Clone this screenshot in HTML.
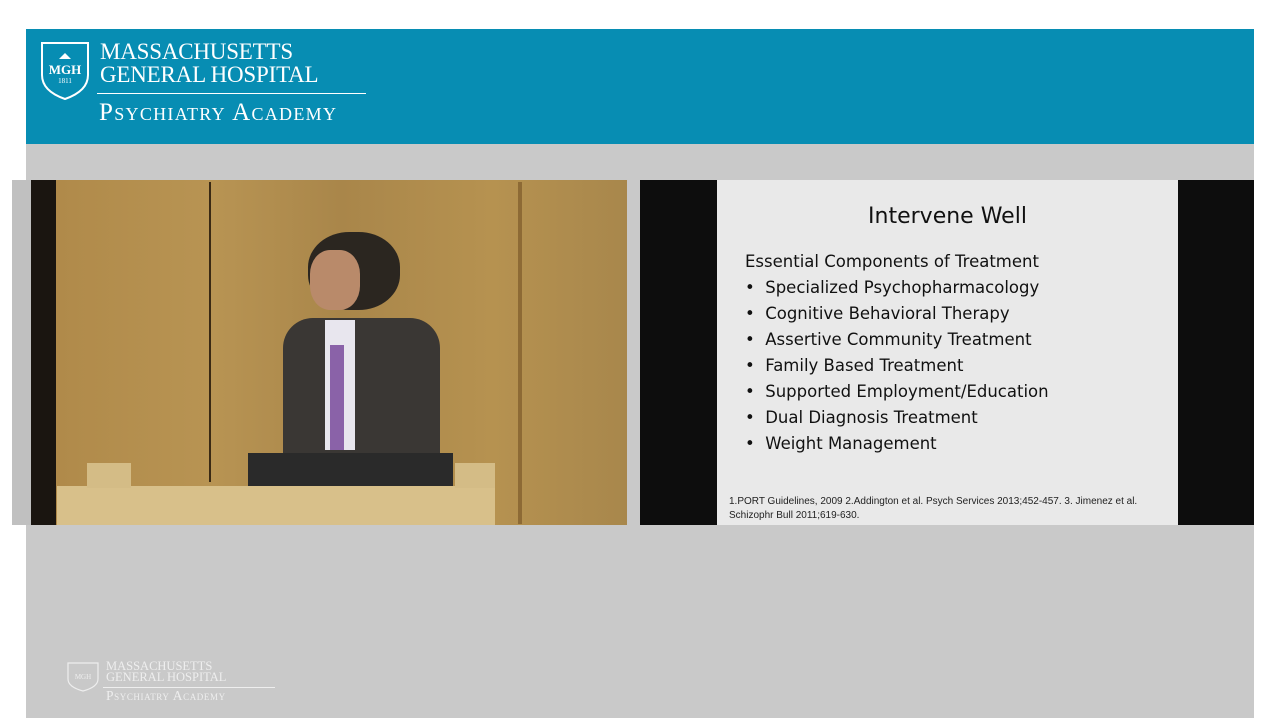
<!DOCTYPE html>
<html><head><style>
body{margin:0;width:1280px;height:720px;background:#fff;position:relative;overflow:hidden;font-family:"Liberation Sans",sans-serif}
.a{position:absolute}
.serif{font-family:"Liberation Serif",serif}
</style></head><body>
<div class="a" style="left:26px;top:29px;width:1228px;height:115px;background:#078db3"></div>
<div class="a" style="left:26px;top:144px;width:1228px;height:574px;background:#c9c9c9"></div>
<svg class="a" style="left:40px;top:41px" width="50" height="60" viewBox="0 0 50 60"><path d="M2 2H48V34Q48 50 25 58Q2 50 2 34Z" fill="none" stroke="#fff" stroke-width="2"/><path d="M19 18h12l-6-6z" fill="#fff"/><text x="25" y="33" fill="#fff" font-family="Liberation Serif" font-weight="bold" font-size="13" text-anchor="middle">MGH</text><text x="25" y="42" fill="#fff" font-family="Liberation Serif" font-size="7" text-anchor="middle">1811</text></svg>
<div class="a serif" style="left:100px;top:40px;color:#fff;font-size:23px;line-height:23px;letter-spacing:-0.2px">MASSACHUSETTS<br>GENERAL HOSPITAL</div>
<div class="a" style="left:97px;top:93px;width:269px;height:1px;background:#fff"></div>
<div class="a serif" style="left:99px;top:99px;color:#fff;font-size:25px;font-variant:small-caps;letter-spacing:1.3px">Psychiatry Academy</div>
<div class="a" style="left:12px;top:180px;width:615px;height:345px;background:linear-gradient(90deg,#c0c0c0 0,#c0c0c0 19px,#1a1510 19px,#1a1510 44px,#b08a4a 44px,#b89453 200px,#a9864a 330px,#b69250 480px,#a8874c 615px)"></div>
<div class="a" style="left:209px;top:182px;width:2px;height:300px;background:#3a2a14"></div>
<div class="a" style="left:518px;top:182px;width:4px;height:342px;background:#8d6a35"></div>
<div class="a" style="left:308px;top:232px;width:92px;height:78px;border-radius:45%;background:#2b2620"></div>
<div class="a" style="left:310px;top:250px;width:50px;height:60px;border-radius:40%;background:#b98a6a"></div>
<div class="a" style="left:283px;top:318px;width:157px;height:150px;border-radius:30px 30px 0 0;background:#3a3734"></div>
<div class="a" style="left:325px;top:320px;width:30px;height:130px;background:#e8e6ee"></div>
<div class="a" style="left:330px;top:345px;width:14px;height:105px;background:#8a62a8"></div>
<div class="a" style="left:248px;top:453px;width:205px;height:38px;background:#2a2a2a"></div>
<div class="a" style="left:57px;top:486px;width:438px;height:39px;background:#d8c08a"></div>
<div class="a" style="left:87px;top:463px;width:44px;height:25px;background:#d4bc86"></div>
<div class="a" style="left:455px;top:463px;width:40px;height:25px;background:#d4bc86"></div>
<div class="a" style="left:640px;top:180px;width:614px;height:345px;background:#0d0d0d"></div>
<div class="a" style="left:717px;top:180px;width:461px;height:345px;background:#e9e9e9"></div>
<div class="a" style="left:717px;top:204px;width:461px;text-align:center;color:#111;font-family:'DejaVu Sans',sans-serif;font-size:22px">Intervene Well</div>
<div class="a" style="left:745px;top:249px;line-height:26px;color:#111;font-family:'DejaVu Sans',sans-serif;font-size:16.5px">Essential Components of Treatment<br>•&nbsp;&nbsp;Specialized Psychopharmacology<br>•&nbsp;&nbsp;Cognitive Behavioral Therapy<br>•&nbsp;&nbsp;Assertive Community Treatment<br>•&nbsp;&nbsp;Family Based Treatment<br>•&nbsp;&nbsp;Supported Employment/Education<br>•&nbsp;&nbsp;Dual Diagnosis Treatment<br>•&nbsp;&nbsp;Weight Management</div>
<div class="a" style="left:729px;top:495px;width:440px;font-size:10px;line-height:14px;color:#222">1.PORT Guidelines, 2009 2.Addington et al. Psych Services 2013;452-457. 3. Jimenez et al. Schizophr Bull 2011;619-630.</div>
<svg class="a" style="left:67px;top:662px" width="32" height="30" viewBox="0 0 32 30"><path d="M1 1H31V17Q31 25 16 29Q1 25 1 17Z" fill="none" stroke="#eee" stroke-width="1.2"/><text x="16" y="17" fill="#eee" font-family="Liberation Serif" font-size="7" text-anchor="middle">MGH</text></svg>
<div class="a serif" style="left:106px;top:661px;color:#eee;font-size:12.5px;line-height:11px">MASSACHUSETTS<br>GENERAL HOSPITAL</div>
<div class="a" style="left:103px;top:687px;width:172px;height:1px;background:#eee"></div>
<div class="a serif" style="left:106px;top:688px;color:#eee;font-size:13.5px;font-variant:small-caps;letter-spacing:0.6px">Psychiatry Academy</div>
</body></html>
